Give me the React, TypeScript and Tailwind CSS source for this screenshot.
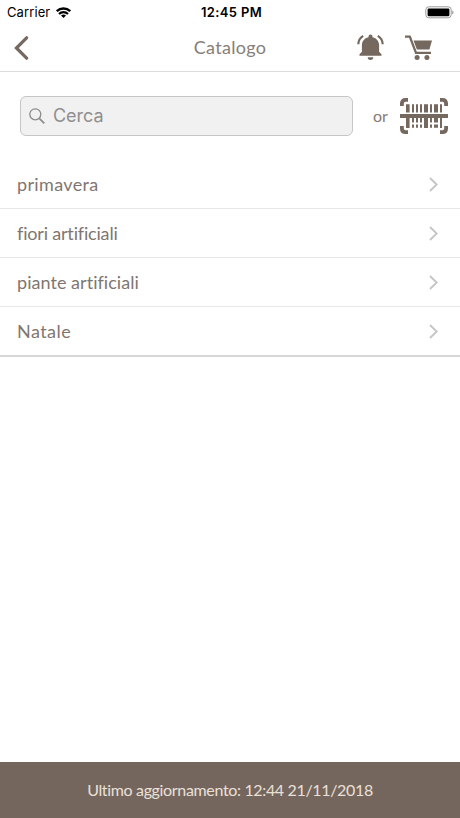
import React, { useState } from "react";

type Category = { id: number; label: string; tracking: string };

const categories: Category[] = [
  { id: 1, label: "primavera", tracking: "tracking-[0.35px]" },
  { id: 2, label: "fiori artificiali", tracking: "tracking-[-0.18px]" },
  { id: 3, label: "piante artificiali", tracking: "tracking-[0.04px]" },
  { id: 4, label: "Natale", tracking: "tracking-[0.45px]" },
];

const StatusBar = () => (
  <div className="h-6 grid grid-cols-3 items-center pl-[7px] pr-[6px] text-black font-['Inter',sans-serif]">
    <div className="flex items-center gap-[6px]">
      <span className="text-[13px] leading-4 tracking-[0.1px]">Carrier</span>
      <svg className="w-[15px] h-[11px]" viewBox="0 0 15 11" fill="none" stroke="currentColor" strokeWidth="2.5">
        <path d="M0.8 4.2a9.6 9.6 0 0 1 13.4 0" />
        <path d="M3 7a6.3 6.3 0 0 1 9 0" strokeWidth="2.1" />
        <path d="M7.5 11 5 8.6a3.6 3.6 0 0 1 5 0z" fill="currentColor" stroke="none" />
      </svg>
    </div>
    <span className="text-center pl-[2px] text-[13px] leading-4 font-semibold tracking-[0.35px]">12:45 PM</span>
    <svg className="justify-self-end w-[29px] h-[13px]" viewBox="0 0 29 13">
      <rect x="0.8" y="0.8" width="25.4" height="11" rx="3" fill="none" stroke="#9a9a9a" strokeWidth="1" />
      <rect x="2.6" y="2.5" width="21.8" height="7.8" rx="1.2" />
      <path d="M27.3 4.5c1.6.5 1.6 3.5 0 4z" fill="#8a8a8a" />
    </svg>
  </div>
);

const BellIcon = () => (
  <svg className="w-[27px] h-[27px]" viewBox="0 0 27 27" fill="currentColor">
    <path d="M13.5 0.5a2 2 0 0 1 2 2v.7c4.3 1 6.6 4 6.6 8v6.5l2.4 2.6v1.5H2.5v-1.5l2.4-2.6v-6.5c0-4 2.3-7 6.6-8v-.7a2 2 0 0 1 2-2z" />
    <path d="M10.7 23.3h5.6a2.8 2.6 0 0 1-5.6 0z" />
    <path d="M6.2 1.9Q1.5 4.7 1.3 10.2M20.8 1.9q4.7 2.8 4.9 8.3" fill="none" stroke="currentColor" strokeWidth="2.2" />
  </svg>
);

const CartIcon = () => (
  <svg className="w-[27px] h-[26px]" viewBox="0 0 27 26" fill="currentColor">
    <path d="M0 1.7h4.8l6.2 16.2H26" fill="none" stroke="currentColor" strokeWidth="2.3" />
    <path d="M8.5 5.6H27l-2.6 9H11.9z" />
    <circle cx="12.1" cy="22.5" r="2.5" />
    <circle cx="21.9" cy="22.5" r="2.5" />
  </svg>
);

const BarcodeIcon = () => (
  <svg className="w-12 h-9" viewBox="0 0 48 36" fill="currentColor">
    <path
      d="M1.9 8V5.6Q1.9 1.9 5.6 1.9H8M40 1.9h2.4q3.7 0 3.7 3.7V8M46.1 28v2.4q0 3.7-3.7 3.7H40M8 34.1H5.6q-3.7 0-3.7-3.7V28"
      fill="none"
      stroke="currentColor"
      strokeWidth="3.8"
    />
    <path d="M0 16h48v4H0z" />
    <path d="M6 6.2h3.6v8.3H6zM12 6.2h2v8.3h-2zM16 6.2h2v8.3h-2zM20 6.2h2v8.3h-2zM24 6.2h4v8.3h-4zM30 6.2h2v8.3h-2zM34 6.2h4v8.3h-4zM40 6.2h2v8.3h-2z" />
    <path d="M6 19h3.6v11H6zM12 19h2v5.5h-2zM12 26.5h2v3.3h-2zM16 19h2v5.5h-2zM16 26.5h2v3.3h-2zM20 19h2v5.5h-2zM20 26.5h2v3.3h-2zM24 19h4v11h-4zM30 19h2v5.5h-2zM30 26.5h2v3.3h-2zM34 19h4v5.5h-4zM34 26.5h4v3.3h-4zM40 19h2v11h-2z" />
  </svg>
);

const App = () => {
  const [query, setQuery] = useState("");

  return (
    <div className="h-screen flex flex-col bg-white text-[#75685f] font-['Lato',sans-serif]">
      <StatusBar />

      <header className="h-12 shrink-0 grid grid-cols-3 items-center border-b border-[#dcdcdc]">
        <button className="justify-self-start pl-[14px]" aria-label="Indietro">
          <svg className="w-[15px] h-6" viewBox="0 0 15 24" fill="none" stroke="currentColor" strokeWidth="3.2">
            <path d="M12.6 1.8 2.4 12l10.2 10.2" strokeLinecap="round" />
          </svg>
        </button>
        <h1 className="text-center text-[18px] tracking-[0.3px] text-[#877e78]">Catalogo</h1>
        <div className="flex items-center justify-end gap-[21px] pr-[28px]">
          <button aria-label="Notifiche"><BellIcon /></button>
          <button aria-label="Carrello"><CartIcon /></button>
        </div>
      </header>

      <div className="h-[88px] shrink-0 flex items-center pl-5 pr-3">
        <label className="w-[333px] h-10 flex items-center gap-2 px-2 rounded-md border border-[#c6c6c6] bg-[#f1f1f1] text-[#8b8b8b]">
          <svg className="w-4 h-4 shrink-0" viewBox="0 0 16 16" fill="none" stroke="currentColor" strokeWidth="1.3">
            <circle cx="6.3" cy="6.3" r="5.5" />
            <path d="m10.3 10.3 5 5" strokeWidth="1.7" />
          </svg>
          <input
            value={query}
            onChange={(e) => setQuery(e.target.value)}
            placeholder="Cerca"
            className="w-full min-w-0 pb-0.5 bg-transparent outline-none text-[18px] tracking-[-0.05px] font-['Inter',sans-serif] placeholder:text-[#8f8f8f]"
          />
        </label>
        <span className="ml-5 text-[16px] text-[#847b75]">or</span>
        <button className="ml-auto" aria-label="Scansiona"><BarcodeIcon /></button>
      </div>

      <ul className="border-b border-[#d6d6d6]">
        {categories.map((category) => (
          <li key={category.id} className="h-[49px] flex items-center justify-between pl-[17px] pr-[22px] border-b border-[#e7e7e7] last:border-[#d6d6d6]">
            <span className={`text-[18px] text-[#7f7670] ${category.tracking}`}>{category.label}</span>
            <svg className="w-[9px] h-[15px]" viewBox="0 0 9 15" fill="none" stroke="#c5c5c5" strokeWidth="1.9">
              <path d="m1 1 6.7 6.5L1 14" />
            </svg>
          </li>
        ))}
      </ul>

      <footer className="mt-auto h-14 shrink-0 flex items-center justify-center bg-[#75665d] text-[#eae0d8]">
        <span className="text-[16px] tracking-[-0.34px] whitespace-nowrap">Ultimo aggiornamento: 12:44 21/11/2018</span>
      </footer>
    </div>
  );
};

export default App;
